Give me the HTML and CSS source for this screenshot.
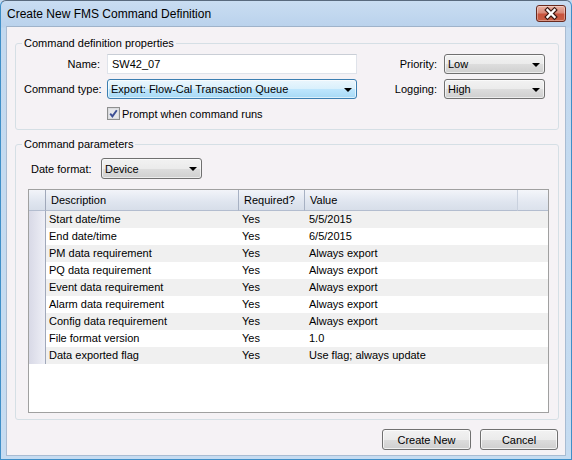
FILE: index.html
```html
<!DOCTYPE html>
<html>
<head>
<meta charset="utf-8">
<title>Create New FMS Command Definition</title>
<link rel="stylesheet" href="styles.css">
</head>
<body>
<div class="window">
  <div class="titlebar">
    <span class="title">Create New FMS Command Definition</span>
    <div class="close">
      <svg width="30" height="17" viewBox="0 0 30 17">
        <path d="M11.5 5 L18.5 12 M18.5 5 L11.5 12" stroke="#3b1711" stroke-width="4.6" stroke-linecap="square" fill="none"/>
        <path d="M11.5 5 L18.5 12 M18.5 5 L11.5 12" stroke="#ffffff" stroke-width="2.4" stroke-linecap="square" fill="none"/>
      </svg>
    </div>
  </div>
  <div class="client">
    <fieldset class="group props">
      <legend>Command definition properties</legend>
      <div class="props-grid">
        <span class="lbl">Name:</span>
        <div class="textbox">SW42_07</div>
        <span class="lbl">Priority:</span>
        <div class="combo">Low<span class="arrow"></span></div>

        <span class="lbl">Command type:</span>
        <div class="combo active">Export: Flow-Cal Transaction Queue<span class="arrow"></span></div>
        <span class="lbl">Logging:</span>
        <div class="combo">High<span class="arrow"></span></div>

        <span></span>
        <div class="check-row">
          <span class="checkbox">
            <svg width="13" height="13" viewBox="0 0 13 13">
              <rect x="0.5" y="0.5" width="12" height="12" fill="#f4f4f4" stroke="#8e8f8f"/>
              <rect x="1.5" y="1.5" width="10" height="10" fill="#e6e7ea" stroke="#dadbde"/>
              <path d="M3.2 6.6 L5.4 9.4 L9.8 3.2" stroke="#3d4f94" stroke-width="1.9" fill="none"/>
            </svg>
          </span>
          <span>Prompt when command runs</span>
        </div>
      </div>
    </fieldset>

    <fieldset class="group params">
      <legend>Command parameters</legend>
      <div class="date-row">
        <span class="date-lbl">Date format:</span>
        <div class="combo date-combo">Device<span class="arrow"></span></div>
      </div>
      <div class="grid">
        <div class="hdr">
          <div class="hcell corner"></div>
          <div class="hcell">Description</div>
          <div class="hcell">Required?</div>
          <div class="hcell">Value</div>
          <div class="hcell filler"></div>
        </div>
        <div class="row"><div class="rh"></div><div class="cell">Start date/time</div><div class="cell">Yes</div><div class="cell">5/5/2015</div><div></div></div>
        <div class="row"><div class="rh"></div><div class="cell">End date/time</div><div class="cell">Yes</div><div class="cell">6/5/2015</div><div></div></div>
        <div class="row"><div class="rh"></div><div class="cell">PM data requirement</div><div class="cell">Yes</div><div class="cell">Always export</div><div></div></div>
        <div class="row"><div class="rh"></div><div class="cell">PQ data requirement</div><div class="cell">Yes</div><div class="cell">Always export</div><div></div></div>
        <div class="row"><div class="rh"></div><div class="cell">Event data requirement</div><div class="cell">Yes</div><div class="cell">Always export</div><div></div></div>
        <div class="row"><div class="rh"></div><div class="cell">Alarm data requirement</div><div class="cell">Yes</div><div class="cell">Always export</div><div></div></div>
        <div class="row"><div class="rh"></div><div class="cell">Config data requirement</div><div class="cell">Yes</div><div class="cell">Always export</div><div></div></div>
        <div class="row"><div class="rh"></div><div class="cell">File format version</div><div class="cell">Yes</div><div class="cell">1.0</div><div></div></div>
        <div class="row"><div class="rh"></div><div class="cell">Data exported flag</div><div class="cell">Yes</div><div class="cell">Use flag; always update</div><div></div></div>
      </div>
    </fieldset>

    <div class="buttons">
      <div class="btn create">Create New</div>
      <div class="btn cancel">Cancel</div>
    </div>
  </div>
</div>
</body>
</html>
```

FILE: styles.css
```css
* { box-sizing: border-box; }
html, body { margin: 0; padding: 0; }
body {
  width: 572px;
  height: 460px;
  overflow: hidden;
  font-family: "Liberation Sans", Arial, sans-serif;
  font-size: 11px;
  color: #000;
  background: #c4daf0;
}

.window {
  width: 572px;
  height: 460px;
  display: flex;
  flex-direction: column;
  background: linear-gradient(#c9ddf2, #bad2ec 26px, #c3d9ef 27px, #c6dcf1);
  border: 1px solid #3f8fc8;
  border-top-color: #596a7e;
  border-radius: 6px 6px 0 0;
  padding: 0 5px 3px 5px;
}

.titlebar {
  height: 25px;
  flex: none;
  display: flex;
  justify-content: space-between;
  align-items: center;
  padding-left: 1px;
}
.title {
  font-size: 12px;
  color: #000;
  padding-top: 1px;
}
.close {
  align-self: flex-start;
  margin-top: 4px;
  width: 30px;
  height: 17px;
  border: 1px solid #6a2a1f;
  border-radius: 3px;
  background: linear-gradient(#eab2a4, #d98a79 45%, #c8533d 55%, #c85f45);
  box-shadow: inset 0 0 0 1px rgba(255,255,255,0.35);
  display: flex;
  align-items: center;
  justify-content: center;
}
.close svg { display: block; margin: -1px; }

.client {
  flex: 1;
  background: #f5f2f5;
  display: flex;
  flex-direction: column;
  border: 1px solid #a9bcd2;
  border-top-color: #9fb3ca;
}

.group {
  border: 1px solid #d5dfe5;
  border-radius: 3px;
  min-width: 0;
}
.group legend {
  padding: 0 2px;
  margin-left: -2px;
  line-height: 14px;
  height: 14px;
}

.props {
  margin: 9px 6px 0 8px;
  padding: 4px 13px 7px 8px;
}
.props-grid {
  display: grid;
  grid-template-columns: 76px 250px 1fr 101px;
  grid-template-rows: 20px 20px 18px;
  column-gap: 7px;
  row-gap: 5px;
  align-items: center;
}
.lbl { text-align: right; white-space: nowrap; }

.textbox {
  height: 20px;
  border: 1px solid #dfe3ea;
  border-top-color: #c9ced6;
  background: #fff;
  padding-left: 4px;
  line-height: 18px;
}

.combo {
  height: 20px;
  border: 1px solid #707070;
  border-radius: 3px;
  background: linear-gradient(#f2f2f2, #ebebeb 50%, #dddddd 51%, #cfcfcf);
  box-shadow: inset 0 0 0 1px rgba(255,255,255,0.6);
  display: flex;
  align-items: center;
  justify-content: space-between;
  padding: 0 4px 0 3px;
  white-space: nowrap;
}
.combo.active {
  border-color: #3c7fb1;
  background: linear-gradient(#eaf6fd, #d9f0fc 50%, #bee6fd 51%, #a7d9f5);
}
.arrow {
  width: 0;
  height: 0;
  border-left: 4px solid transparent;
  border-right: 4px solid transparent;
  border-top: 4px solid #000;
  margin-top: 1px;
}

.check-row {
  display: flex;
  align-items: center;
  gap: 2px;
  height: 18px;
  padding-top: 1px;
}
.checkbox { display: flex; width: 13px; height: 13px; }
.checkbox svg { display: block; }

.params {
  margin: 7px 6px 0 8px;
  padding: 7px 9px 6px 8px;
}
.date-row {
  display: flex;
  align-items: center;
  margin-left: 7px;
  height: 21px;
}
.date-lbl { width: 70px; }
.date-combo { width: 101px; height: 21px; }

.grid {
  margin: 10px 0 0 4px;
  height: 224px;
  border: 1px solid #a0a0a0;
  background: #fff;
  overflow: hidden;
}
.hdr, .row {
  display: grid;
  grid-template-columns: 17px 193px 66px 213px 1fr;
}
.hdr {
  height: 21px;
}
.hcell {
  background: linear-gradient(#f2f4f9, #dfe5ef 60%, #d7dee9);
  border-right: 1px solid #a7b1c3;
  border-bottom: 1px solid #b3bdcf;
  padding-left: 5px;
  line-height: 20px;
  white-space: nowrap;
}
.hcell.corner { border-right-color: #a0a8ba; }
.hcell:nth-child(4) { border-right-color: #c9d1de; }
.hcell.filler { border-right: none; background: linear-gradient(#f4f6fa, #e3e8f1 60%, #dce2ec); }

.row {
  height: 17px;
  line-height: 17px;
}
.row:nth-child(even) { background: #f0f0f0; }
.rh {
  background: linear-gradient(to right, #d8d9e6, #eeeff6);
  border-right: 1px solid #a0a8ba;
}
.cell {
  padding-left: 3px;
  white-space: nowrap;
  overflow: hidden;
}
.row .cell:nth-child(4) { padding-left: 4px; }

.buttons {
  display: flex;
  justify-content: flex-end;
  gap: 9px;
  margin: 9px 7px 0 0;
}
.btn {
  height: 21px;
  border: 1px solid #707070;
  border-radius: 3px;
  background: linear-gradient(#f2f2f2, #ebebeb 50%, #dddddd 51%, #cfcfcf);
  box-shadow: inset 0 0 0 1px rgba(255,255,255,0.7);
  display: flex;
  align-items: center;
  justify-content: center;
}
.btn.create { width: 89px; }
.btn.cancel { width: 78px; }
```
